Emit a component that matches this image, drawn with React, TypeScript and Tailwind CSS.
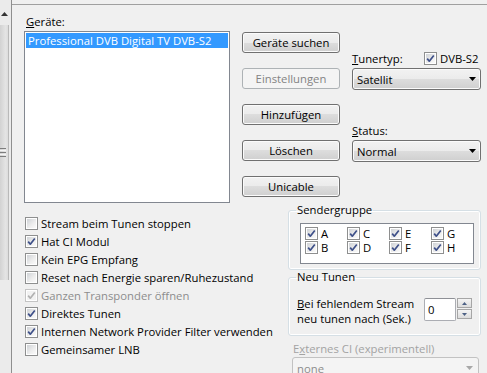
import React from "react";

type CheckProps = { checked?: boolean; disabled?: boolean };

function Check({ checked, disabled }: CheckProps) {
  return (
    <span
      className={
        "relative block h-[13px] w-[13px] shrink-0 border bg-white p-[1px] " +
        (disabled ? "border-[#c4c4c4]" : "border-[#8e8f8f]")
      }
    >
      <span
        className={
          "block h-full w-full " +
          (disabled
            ? "bg-[#f2f2f2]"
            : "bg-[linear-gradient(135deg,#cfd2d6_0%,#eeeeee_60%,#fafafa_100%)]")
        }
      />
      {checked && (
        <svg className="absolute left-0 top-0" width="11" height="11" viewBox="0 0 11 11">
          <path
            d="M2.2 5.6 L4.3 8.2 L8.8 2.4"
            fill="none"
            stroke={disabled ? "#b1b1b1" : "#3e5089"}
            strokeWidth="1.7"
            strokeLinejoin="round"
          />
        </svg>
      )}
    </span>
  );
}

function Button({ label, disabled }: { label: string; disabled?: boolean }) {
  return (
    <div
      className={
        "flex h-[21px] w-[98px] items-center justify-center rounded-[3px] border " +
        (disabled
          ? "border-[#adb2b5] bg-[#f4f4f4] text-[#838383]"
          : "border-[#707070] bg-[linear-gradient(#f2f2f2_0%,#ebebeb_50%,#dddddd_50%,#cfcfcf_100%)] shadow-[inset_0_0_0_1px_#fbfbfb]")
      }
    >
      {label}
    </div>
  );
}

function Arrow({ color = "#000" }: { color?: string }) {
  return (
    <svg width="7" height="4" viewBox="0 0 7 4">
      <path d="M0 0 H7 L3.5 4 Z" fill={color} />
    </svg>
  );
}

function Combo({ value }: { value: string }) {
  return (
    <div className="flex h-[22px] w-[129px] items-center justify-between rounded-[3px] border border-[#707070] bg-[linear-gradient(#f2f2f2_0%,#ebebeb_50%,#dddddd_50%,#cfcfcf_100%)] pl-[4px] pr-[4px] shadow-[inset_0_0_0_1px_#fbfbfb]">
      <span>{value}</span>
      <Arrow />
    </div>
  );
}

function CheckRow({ label, checked, disabled }: { label: string; checked?: boolean; disabled?: boolean }) {
  return (
    <div className={"flex h-[18px] items-center gap-[3px] " + (disabled ? "text-[#8d8d8d]" : "")}>
      <Check checked={checked} disabled={disabled} />
      <span>{label}</span>
    </div>
  );
}

function Scrollbar() {
  return (
    <div className="flex h-full w-[12px] shrink-0 flex-col border-r border-[#8f8f8f] bg-[#ebebeb]">
      <div className="flex h-[25px] items-start justify-center pr-[2px] pt-[12px]">
        <svg width="7" height="4" viewBox="0 0 7 4">
          <path d="M0 4 H7 L3.5 0 Z" fill="#333" />
        </svg>
      </div>
      <div className="flex h-[255px] w-[9px] flex-col items-start justify-center gap-[1px] border-r border-[#b9b9b9] bg-[linear-gradient(90deg,#d2d2d2,#e4e4e4_70%,#dcdcdc)]">
        <span className="block h-[1px] w-[6px] bg-[#7d7d7d]" />
        <span className="block h-[1px] w-[6px] bg-[#f5f5f5]" />
        <span className="block h-[1px] w-[6px] bg-[#7d7d7d]" />
        <span className="block h-[1px] w-[6px] bg-[#f5f5f5]" />
        <span className="block h-[1px] w-[6px] bg-[#7d7d7d]" />
      </div>
    </div>
  );
}

export default function App() {
  const groups = [
    ["A", "C", "E", "G"],
    ["B", "D", "F", "H"],
  ];
  return (
    <div className="flex h-[373px] w-[487px] overflow-hidden bg-[#f0f0f0] font-['Segoe_UI','Open_Sans',sans-serif] text-[11.3px] leading-[15px] text-black">
      <Scrollbar />
      <div className="flex min-w-0 flex-1 flex-col pt-[4px]">
        <div className="flex flex-1 flex-col border-t border-[#a0a0a0]">
          {/* top section */}
          <div className="flex h-[198px]">
            <div className="ml-[12px] flex w-[206px] flex-col pt-[9px]">
              <div className="mb-[2px] h-[15px] pl-[2px]">
                <span className="underline">G</span>eräte:
              </div>
              <div className="h-[172px] border border-[#828790] bg-white p-[1px]">
                <div className="h-[15px] bg-[#3399ff] pl-[2px] text-white">Professional DVB Digital TV DVB-S2</div>
              </div>
            </div>
            <div className="ml-[12px] flex flex-col gap-[15px] pt-[27px]">
              <Button label="Geräte suchen" />
              <Button label="Einstellungen" disabled />
              <Button label="Hinzufügen" />
              <Button label="Löschen" />
              <Button label="Unicable" />
            </div>
            <div className="ml-[12px] flex w-[129px] flex-col pt-[46px]">
              <div className="mb-[2px] flex h-[15px] items-center">
                <span className="w-[72px]">
                  <span className="underline">T</span>unertyp:
                </span>
                <Check checked />
                <span className="ml-[3px]">DVB-S2</span>
              </div>
              <Combo value="Satellit" />
              <div className="mb-[2px] mt-[33px] h-[15px]">
                <span className="underline">S</span>tatus:
              </div>
              <Combo value="Normal" />
            </div>
          </div>

          {/* bottom section */}
          <div className="flex flex-1">
            <div className="flex w-[276px] flex-col pl-[13px] pt-[11px]">
              <CheckRow label="Stream beim Tunen stoppen" />
              <CheckRow label="Hat CI Modul" checked />
              <CheckRow label="Kein EPG Empfang" />
              <CheckRow label="Reset nach Energie sparen/Ruhezustand" />
              <CheckRow label="Ganzen Transponder öffnen" checked disabled />
              <CheckRow label="Direktes Tunen" checked />
              <CheckRow label="Internen Network Provider Filter verwenden" checked />
              <CheckRow label="Gemeinsamer LNB" />
            </div>
            <div className="flex w-[193px] flex-col">
              <fieldset className="rounded-[3px] border border-[#d5dfe5] pb-[5px] pl-[11px] shadow-[inset_0_0_0_1px_#ffffff]">
                <legend className="-ml-[4px] px-[1px] leading-[14px]">Sendergruppe</legend>
                <div className="mt-[6px] h-[41px] w-[174px] border border-[#828790] bg-white pl-[4px] pt-[2px]">
                  {groups.map((row, i) => (
                    <div key={i} className="flex h-[14px]">
                      {row.map((g) => (
                        <div key={g} className="flex w-[42px] items-center gap-[3px]">
                          <Check checked />
                          <span>{g}</span>
                        </div>
                      ))}
                    </div>
                  ))}
                </div>
              </fieldset>
              <fieldset className="h-[66px] rounded-[3px] border border-[#d5dfe5] pl-[8px] shadow-[inset_0_0_0_1px_#ffffff]">
                <legend className="-ml-[1px] px-[1px] leading-[14px]">Neu Tunen</legend>
                <div className="mt-[12px] flex items-start">
                  <div className="w-[127px]">
                    <div>
                      <span className="underline">B</span>ei fehlendem Stream
                    </div>
                    <div>neu tunen nach (Sek.)</div>
                  </div>
                  <div className="mt-[2px] flex h-[23px] w-[32px] items-center rounded-[2px] border border-[#abadb3] border-t-[#8e9096] bg-white pl-[3px]">
                    0
                  </div>
                  <div className="ml-[1px] mt-[2px] flex flex-col gap-[1px]">
                    <div className="flex h-[10px] w-[15px] items-center justify-center border border-[#a6a6a6] bg-[linear-gradient(#f4f4f4,#dcdcdc)]">
                      <svg width="5" height="3" viewBox="0 0 5 3">
                        <path d="M0 3 H5 L2.5 0 Z" fill="#4d6185" />
                      </svg>
                    </div>
                    <div className="flex h-[10px] w-[15px] items-center justify-center border border-[#a6a6a6] bg-[linear-gradient(#f4f4f4,#dcdcdc)]">
                      <svg width="5" height="3" viewBox="0 0 5 3">
                        <path d="M0 0 H5 L2.5 3 Z" fill="#4d6185" />
                      </svg>
                    </div>
                  </div>
                </div>
              </fieldset>
              <div className="ml-[5px] mt-[5px] h-[15px] text-[#a3a3a3]">
                E<span className="underline">x</span>ternes CI (experimentell)
              </div>
              <div className="ml-[4px] mt-[1px] flex h-[22px] w-[187px] items-center justify-between rounded-[3px] border border-[#c2c2c2] bg-[#f4f4f4] pl-[4px] pr-[5px] text-[#8d8d8d]">
                <span>none</span>
                <Arrow color="#a8a8a8" />
              </div>
            </div>
          </div>
        </div>
      </div>
    </div>
  );
}
